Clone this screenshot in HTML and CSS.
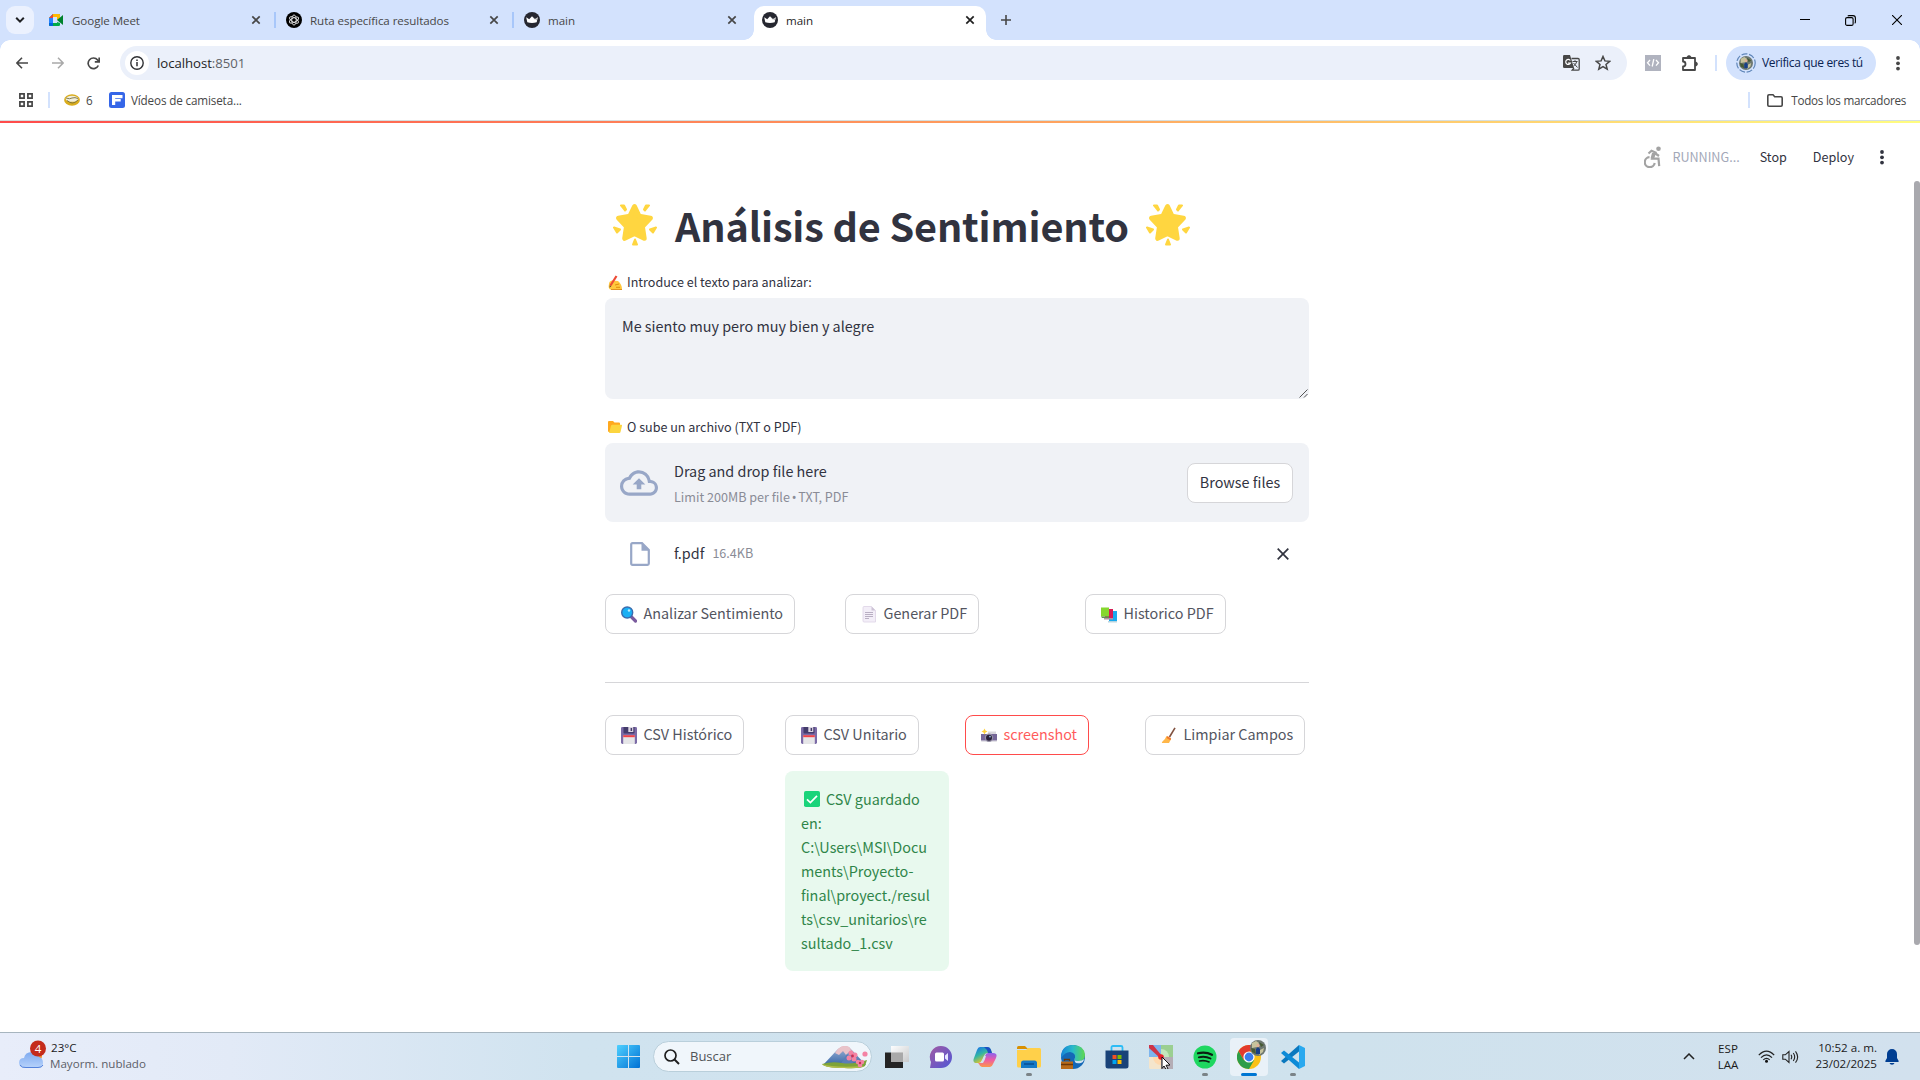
FILE: index.html
```html
<!DOCTYPE html>
<html lang="es">
<head>
<meta charset="utf-8">
<title>main</title>
<link rel="stylesheet" href="styles.css">
</head>
<body>
<svg class="defs" width="0" height="0">
  <symbol id="x" viewBox="0 0 10 10"><path d="M1.3 1.3l7.4 7.4M8.7 1.3L1.3 8.7" stroke="currentColor" stroke-width="1.7" fill="none"/></symbol>
  <symbol id="dots" viewBox="0 0 4 16"><g fill="currentColor"><circle cx="2" cy="3" r="1.9"/><circle cx="2" cy="8.3" r="1.9"/><circle cx="2" cy="13.6" r="1.9"/></g></symbol>
  <symbol id="crown" viewBox="0 0 16 16"><circle cx="8" cy="8" r="8" fill="#262730"/><path d="M2.200 5.200l3 2L8 4.300l2.800 2.900 3-2-1.100 5Q8 11.700 3.300 10.200z" fill="#fff"/><path d="M8 4.300l2.800 2.900 3-2-1 3.300z" fill="#bbb"/></symbol>
  <symbol id="star" viewBox="0 0 44 42"><g fill="#ffd640" stroke="#ffd640" stroke-linejoin="round"><path stroke-width="5" d="M21.500 3l4.600 9.800 11.300 1.800-8 8.500 1.800 11.700L21.500 30l-9.800 4.800 1.800-11.700-8-8.500 11.300-1.800z"/><path stroke-width="2" d="M8 2l3 0 2 4-1 1zM36 2l-3 0-2 4 1 1zM1 24l6 2-3 3zM43 24l-6 2 3 3zM22 36l2 5h-4z"/></g></symbol>
  <symbol id="disk" viewBox="0 0 16 17"><path d="M0 1.200Q0 0 1.200 0h13.600Q16 0 16 1.200v14Q16 17 14.500 17H1.500Q0 17 0 15.200z" fill="#7b6aa6"/><path d="M2.500 0h11v5.500q0 1-1 1h-9q-1 0-1-1z" fill="#433b6b"/><path d="M7.300 0h5v5h-5z" fill="#ddd6e3"/><path d="M9.600 1h1.500v3H9.600z" fill="#433b6b"/><path d="M2.200 8.500h11.600V17H2.200z" fill="#e6e6e8"/><path d="M2.200 8.200h11.600v2H2.200z" fill="#f04348"/></symbol>
  <symbol id="avatar" viewBox="0 0 16 16"><circle cx="8" cy="8" r="8" fill="#6d7770"/><path d="M2 3l4-2 3 2-2 4-5 1zM10 10l4-2-1 4-4 3z" fill="#c6c39c"/><path d="M1 8l4 1 1 5-4-2zM9 2l5 3-3 2z" fill="#475a34"/><path d="M6 14V9l2-2 2 2v5z" fill="#183e86"/><circle cx="8" cy="5.500" r="1.700" fill="#e0b295"/></symbol>
</svg>

<header class="tabs">
  <div class="tab-search"><svg width="10" height="8" viewBox="0 0 10 8"><path d="M1.200 1.800L5 5.600l3.800-3.800" stroke="#202124" stroke-width="2" fill="none"/></svg></div>
  <div class="tab">
    <svg width="16" height="16" viewBox="0 0 16 16"><path d="M1 6l4-4h5.500Q12 2 12 3.200V6l-3 2V5H5v6h4v-1l3 1v2q0 1-1.200 1H2.200Q1 14 1 13z" fill="#00ac47"/><path d="M5 2v4H1z" fill="#ea4335"/><path d="M5 2h6q1 0 1 1v3L9 8V5H5z" fill="#ffba00"/><path d="M1 6h4v5H1z" fill="#2684fc"/><path d="M1 11h4v3H2q-1 0-1-1z" fill="#0066da"/><path d="M9 8l6-5v10z" fill="#00832d"/></svg>
    <span>Google Meet</span><svg class="close" width="10" height="10"><use href="#x"/></svg>
  </div>
  <div class="tab">
    <svg width="16" height="16" viewBox="0 0 16 16"><circle cx="8" cy="8" r="8" fill="#000"/><g fill="none" stroke="#e6e6e6" stroke-width=".9"><ellipse cx="8" cy="8" rx="2.200" ry="5"/><ellipse cx="8" cy="8" rx="2.200" ry="5" transform="rotate(60 8 8)"/><ellipse cx="8" cy="8" rx="2.200" ry="5" transform="rotate(120 8 8)"/></g></svg>
    <span>Ruta específica resultados</span><svg class="close" width="10" height="10"><use href="#x"/></svg>
  </div>
  <div class="tab last">
    <svg width="16" height="16"><use href="#crown"/></svg>
    <span>main</span><svg class="close" width="10" height="10"><use href="#x"/></svg>
  </div>
  <div class="tab active">
    <svg width="16" height="16"><use href="#crown"/></svg>
    <span>main</span><svg class="close" width="10" height="10"><use href="#x"/></svg>
  </div>
  <svg class="plus" width="10" height="10" viewBox="0 0 10 10"><path d="M5 0v10M0 5h10" stroke="#474747" stroke-width="1.600"/></svg>
  <div class="win">
    <svg width="10" height="10" viewBox="0 0 10 10"><path d="M0 4.500h10" stroke="#000"/></svg>
    <svg width="11" height="11" viewBox="0 0 11 11"><g fill="none" stroke="#000" stroke-width="1.100"><rect x=".6" y="2.600" width="7.500" height="7.800" rx="1.500"/><path d="M2.800 1.200Q3.200.6 4 .6h4Q10.400.6 10.400 3v4q0 .8-.7 1.200"/></g></svg>
    <svg width="10" height="10" viewBox="0 0 10 10"><path d="M0 0l10 10M10 0L0 10" stroke="#000" stroke-width="1.100"/></svg>
  </div>
</header>

<div class="toolbar">
  <div class="nav">
    <svg width="12" height="12" viewBox="0 0 12 12"><path d="M12 6H1M6 .8L.9 6 6 11.200" stroke="#474747" stroke-width="1.600" fill="none"/></svg>
    <svg width="12" height="12" viewBox="0 0 12 12"><path d="M0 6h11M6 .8L11.100 6 6 11.200" stroke="#a9a9a9" stroke-width="1.500" fill="none"/></svg>
    <svg width="13" height="13" viewBox="0 0 13 13"><path d="M11.300 8.500A5.300 5.300 0 1 1 10.600 3L12 4.500M12.200.5v4.300H7.800" stroke="#474747" stroke-width="1.700" fill="none"/></svg>
  </div>
  <div class="omni">
    <div class="info"><svg width="14" height="14" viewBox="0 0 14 14"><circle cx="7" cy="7" r="6.200" fill="none" stroke="#303134" stroke-width="1.400"/><path d="M7 6v4.300M7 3.400V5" stroke="#303134" stroke-width="1.500"/></svg></div>
    <span class="url">localhost<i>:8501</i></span>
    <svg class="tr" width="17" height="16" viewBox="0 0 17 16"><path d="M0 1.200Q0 0 1.200 0H7l4 13H1.200Q0 13 0 11.800z" fill="#474747"/><path d="M8.500 3.500H15q1.200 0 1.200 1.200V14q0 1.200-1.200 1.200H9.200L11 13" fill="none" stroke="#474747" stroke-width="1.300"/><path d="M9.500 6.500h5M12 5.200v1.300M13.800 6.500q-.8 3.200-3.300 4.500M10.500 8l4 4.500" fill="none" stroke="#474747"/><path d="M7.300 5.500A2.500 2.500 0 1 0 7.500 8H5" fill="none" stroke="#fff" stroke-width="1.200"/></svg>
    <svg class="bm" width="16" height="16" viewBox="0 0 16 16"><path d="M8 1.500l1.900 4.400 4.800.4-3.700 3.100 1.200 4.700L8 11.600l-4.200 2.500L5 9.400 1.300 6.300l4.800-.4z" fill="none" stroke="#474747" stroke-width="1.500"/></svg>
  </div>
  <svg class="code" width="16" height="16" viewBox="0 0 16 16"><path fill="#b0b3bf" d="M0 0h16v16H0z"/><path d="M5 5L2.500 7.800 5 10.600M11 5l2.500 2.800L11 10.600M8.800 4.200L7.200 11.500" stroke="#fff" stroke-width="1.300" fill="none"/></svg>
  <svg class="puz" width="17" height="17" viewBox="0 0 17 17"><path d="M1 3h12v12H1v-3.500a2.400 2.400 0 0 0 0-5z" fill="none" stroke="#474747" stroke-width="1.800" stroke-linejoin="round"/><path d="M5 2.500a2 1.800 0 0 1 4 0zM13.500 7a1.800 2 0 0 1 0 4z" fill="#474747" stroke="#474747"/></svg>
  <b class="sep"></b>
  <div class="chip"><svg width="20" height="20" viewBox="0 0 20 20"><circle cx="10" cy="10" r="9.200" fill="none" stroke="#5f86b9" stroke-width="1.200" stroke-dasharray="6 1.700"/><use href="#avatar" x="3" y="3" width="14" height="14"/></svg><span>Verifica que eres tú</span></div>
  <svg class="menu" width="4" height="16"><use href="#dots"/></svg>
</div>

<div class="marks">
  <svg width="14" height="14" viewBox="0 0 14 14"><g fill="none" stroke="#474747" stroke-width="1.700"><path d="M.9.900h4.200v4.200H.9zM8.900.900h4.200v4.200H8.900zM.9 8.900h4.200v4.200H.9zM8.900 8.900h4.200v4.200H8.900z"/></g></svg>
  <b class="sep"></b>
  <svg class="ml" width="16" height="12" viewBox="0 0 16 12"><ellipse cx="8" cy="6" rx="7.900" ry="5.800" fill="#d9ac1c"/><ellipse cx="8" cy="4.800" rx="6.300" ry="3" fill="#f1eedc"/><path d="M2 4q4 1.500 6 0 3-1 6 .5M3 6.500q3 2.500 5.500 2.500T14 6" fill="none" stroke="#77703f" stroke-width=".9"/></svg>
  <span class="six">6</span>
  <svg class="fic" width="16" height="16" viewBox="0 0 16 16"><rect width="16" height="16" rx="2.500" fill="#3566e8"/><path d="M3 3h10.500v3.200H6.200V7h5.500v2.600H6.200V13H3z" fill="#fff"/></svg>
  <span class="vid">Vídeos de camiseta...</span>
  <b class="sep right"></b>
  <svg width="16" height="13" viewBox="0 0 16 13"><path d="M.8 2Q.8.800 2 .800h4l1.700 1.900H14q1.200 0 1.200 1.200V11q0 1.200-1.200 1.200H2Q.8 12.200.8 11z" fill="none" stroke="#474747" stroke-width="1.600"/></svg>
  <span class="all">Todos los marcadores</span>
</div>
<div class="rainbow"></div>

<main class="app">
  <div class="bar">
    <svg width="18" height="22" viewBox="0 0 18 22"><g fill="none" stroke="#a3a3a3" stroke-width="2.200"><path d="M5.500 11.200A5 5 0 1 0 10.700 17" /><path d="M4.500 7.500l3-2.700 4 1.800-3.200 6h6.200l.7 7.500"/><path d="M11.500 7.500l3.500 2.500"/></g><circle cx="14.500" cy="2.700" r="2.300" fill="#a3a3a3"/><path d="M8 7l4-.5-2 6H6.500z" fill="#a3a3a3"/></svg>
    <span class="run">RUNNING...</span><span class="stop">Stop</span><span class="deploy">Deploy</span>
    <svg class="menu" width="4" height="16"><use href="#dots"/></svg>
  </div>
  <div class="col">
    <h1><svg width="44" height="43"><use href="#star"/></svg><span>Análisis de Sentimiento</span><svg width="44" height="43"><use href="#star"/></svg></h1>
    <div class="label l1"><svg width="16" height="15" viewBox="0 0 16 15"><path d="M2 9Q2 6 5 5.500L11 6q4 3 4 8.500H3Q1 13 2 9z" fill="#ffc83d"/><path d="M8 10l4-1M9 12.300h4M4 14.500h11" stroke="#d67d00" stroke-width=".8" fill="none"/><path d="M3.500 10.500L9.500 1" stroke="#ed4b36" stroke-width="2.200"/><path d="M2.500 12.700l.3-2.500 1.500 1z" fill="#5b3f2b"/></svg><span>Introduce el texto para analizar:</span></div>
    <div class="area">Me siento muy pero muy bien y alegre<svg width="9" height="9" viewBox="0 0 9 9"><path d="M.5 8.500l8-8M5 8.500L8.500 5" stroke="#555" fill="none"/></svg></div>
    <div class="label l2"><svg width="16" height="14" viewBox="0 0 16 14"><path d="M1 2q0-1 1-1h4l1.500 1.500H12q1 0 1 1V12H2q-1 0-1-1z" fill="#ffa91f"/><path d="M4 5.800Q4.300 4.800 5.500 4.800h8.800q1 0 .7 1L13.500 12q-.2 1-1.200 1H2z" fill="#fcd53f"/></svg><span>O sube un archivo (TXT o PDF)</span></div>
    <div class="drop">
      <svg width="38" height="38" viewBox="0 0 24 24" fill="#98a7c7"><path d="M19.350 10.040A7.490 7.490 0 0 0 12 4C9.110 4 6.600 5.640 5.350 8.040A5.994 5.994 0 0 0 0 14c0 3.310 2.690 6 6 6h13c2.760 0 5-2.240 5-5 0-2.640-2.050-4.780-4.650-4.960zM19 18H6c-2.210 0-4-1.790-4-4 0-2.050 1.530-3.760 3.560-3.970l1.070-.11.500-.95A5.469 5.469 0 0 1 12 6c2.620 0 4.880 1.860 5.390 4.430l.3 1.500 1.530.11A2.980 2.980 0 0 1 22 15c0 1.650-1.350 3-3 3zM8 13h2.550v3h2.900v-3H16l-4-4z"/></svg>
      <div class="dtext"><span>Drag and drop file here</span><small>Limit 200MB per file <i class="dot">•</i> TXT, PDF</small></div>
      <div class="btn browse"><span>Browse files</span></div>
    </div>
    <div class="file">
      <svg class="doc" width="20" height="24" viewBox="0 0 20 24"><path d="M1.200 2.500Q1.200 1.200 2.500 1.200H12l6.800 6.800v13.500q0 1.300-1.300 1.300h-15q-1.300 0-1.300-1.300z" fill="none" stroke="#98a7c7" stroke-width="2.200"/><path d="M11.500 1v7.800H19z" fill="#98a7c7"/></svg>
      <span>f.pdf</span><small>16.4KB</small>
      <svg class="rm" width="12" height="12" viewBox="0 0 12 12"><path d="M.7.700l10.600 10.600M11.300.700L.7 11.300" stroke="#31333f" stroke-width="1.700"/></svg>
    </div>
    <div class="row three">
      <div class="btn"><svg width="16" height="17" viewBox="0 0 16 17"><path d="M10 10.500l4.500 4.500" stroke="#7b5c9e" stroke-width="3.200" stroke-linecap="round"/><circle cx="6.200" cy="6.500" r="5.500" fill="#1ab0f5" stroke="#3a6cae" stroke-width="1.400"/><circle cx="8" cy="4.500" r="1.200" fill="#b9efff"/></svg><span>Analizar Sentimiento</span></div>
      <div class="btn"><svg width="16" height="17" viewBox="0 0 16 17"><path d="M2 1.500Q2 .5 3 .5h7.500l4 4V16H3q-1 0-1-1z" fill="#f3eef8" stroke="#ddd3e6" stroke-width=".8"/><path d="M10.500.5v4h4z" fill="#cdc4d6"/><path d="M4 6.500h8M4 8.500h8M4 10.500h8M4 12.500h4" stroke="#a99eb5" stroke-width=".8"/></svg><span>Generar PDF</span></div>
      <div class="btn"><svg width="16" height="17" viewBox="0 0 16 17"><path d="M8 5h8v10H8z" fill="#18a9ee"/><path d="M7 15h9v1.500H7z" fill="#b8d4df"/><path d="M4 3h8v10H4z" fill="#d51c55"/><path d="M3 12h9v1.500H3z" fill="#b193a2"/><path d="M0 1.500h8v9H0z" fill="#86d72f"/><path d="M0 10.500h8V12H1z" fill="#628f54"/></svg><span>Historico PDF</span></div>
    </div>
    <hr>
    <div class="row four">
      <div class="btn"><svg width="16" height="17"><use href="#disk"/></svg><span>CSV Histórico</span></div>
      <div class="cell"><div class="btn"><svg width="16" height="17"><use href="#disk"/></svg><span>CSV Unitario</span></div>
        <div class="ok"><svg width="16" height="16" viewBox="0 0 16 16"><rect width="16" height="16" rx="1.800" fill="#1ad47a"/><path d="M3 8.300l3.400 3.300L13 4.800" stroke="#fff" stroke-width="1.700" fill="none"/></svg>CSV guardado<br>en:<br>C:\Users\MSI\Docu<br>ments\Proyecto-<br>final\proyect./resul<br>ts\csv_unitarios\re<br>sultado_1.csv</div>
      </div>
      <div class="btn red"><svg width="16" height="17" viewBox="0 0 16 17"><path d="M7 4.500h8V8H7z" fill="#d9d7dd"/><path d="M0 7h16v6.500Q16 14.500 15 14.500H1q-1 0-1-1z" fill="#756698"/><path d="M0 13.500h16v1.300H0z" fill="#eee"/><circle cx="8" cy="10.800" r="4.200" fill="#9690a6"/><circle cx="8" cy="10.800" r="3" fill="#28203a"/><circle cx="9" cy="9.600" r=".9" fill="#91b9dd"/><path d="M3.500 1.500l1 2 2 1-2 1-1 2-1-2-2-1 2-1z" fill="#ffd23c"/></svg><span>screenshot</span></div>
      <div class="btn"><svg width="16" height="17" viewBox="0 0 16 17"><path d="M14 .8L8.500 10" stroke="#80513f" stroke-width="1.600"/><path d="M5.500 9l4.500 3-2 4H1q-.5-1 .5-1.500Q4 13 5.500 9z" fill="#ffb74a"/><path d="M6.500 9l3.700 2.500-.8 1.800L5.500 11z" fill="#f27a2b"/></svg><span>Limpiar Campos</span></div>
    </div>
  </div>
  <div class="scroll"></div>
</main>

<footer class="task">
  <div class="weather">
    <svg width="30" height="34" viewBox="0 0 30 34"><defs><linearGradient id="cl" x2="0" y2="1"><stop stop-color="#7eaaf0"/><stop offset="1" stop-color="#b8d3fb"/></linearGradient></defs><circle cx="19" cy="16" r="5" fill="#f28c28"/><path d="M7 28q-6 0-6-5t5-5q1-6 8-6 5 0 7 5 4 1 4 6t-5 5z" fill="url(#cl)"/><path d="M2 25q2 3 6 2.500h12q4 0 5-2.500" stroke="#5583dc" fill="none"/><circle cx="20" cy="8.500" r="8" fill="#c42b1c"/><text x="20" y="12.500" text-anchor="middle" class="num">4</text></svg>
    <div><span class="deg">23°C</span><span class="may">Mayorm. nublado</span></div>
  </div>
  <svg class="logo" width="23" height="23" viewBox="0 0 23 23"><defs><linearGradient id="wn" x2="1" y2="1"><stop stop-color="#4ed0ff"/><stop offset="1" stop-color="#0070d4"/></linearGradient></defs><path fill="url(#wn)" d="M1 0h10v11H0V1Q0 0 1 0zM12 0h10q1 0 1 1v10H12zM0 12h11v11H1q-1 0-1-1zM12 12h11v10q0 1-1 1H12z"/></svg>
  <div class="search">
    <svg width="16" height="16" viewBox="0 0 16 16"><circle cx="6.500" cy="6.500" r="5.500" fill="none" stroke="#1f1f1f" stroke-width="1.700"/><path d="M10.500 10.500l4.500 4.500" stroke="#1f1f1f" stroke-width="2"/></svg>
    <span>Buscar</span>
    <svg class="fuji" width="46" height="24" viewBox="0 0 46 24"><defs><linearGradient id="fj" x2="0" y2="1"><stop stop-color="#e8aab4"/><stop offset=".4" stop-color="#7897c5"/><stop offset="1" stop-color="#3868a8"/></linearGradient></defs><path d="M1 20L16 4q5-5 11-2l17 18z" fill="url(#fj)"/><path d="M16 4q5-5 11-2l4 6-4-1-3 3-3-4-4 4-4-2z" fill="#e9c3c9"/><path d="M18 20l7-11 8 11z" fill="#5b7db7"/><path d="M0 19q10-3 20-1t25-3l-2 6q-4 3-21 2-19 0-22-4z" fill="#7da338"/><path d="M0 19q12 4 42 2-5 3-20 2-19 0-22-4z" fill="#b2bd4a"/><g fill="#f483a4"><circle cx="29" cy="8" r="2.500"/><circle cx="33" cy="10" r="2.500"/><circle cx="32" cy="14" r="2.500"/><circle cx="27" cy="13" r="2.500"/><circle cx="36" cy="17" r="2.300"/><circle cx="40" cy="17" r="2.300"/><circle cx="38" cy="20" r="2.300"/><circle cx="43" cy="9" r="2.600"/></g><circle cx="30.500" cy="11" r="1.400" fill="#c93054"/><circle cx="38" cy="18" r="1.200" fill="#c93054"/></svg>
  </div>
  <div class="icons">
    <div><svg width="24" height="22" viewBox="0 0 24 22"><defs><linearGradient id="tv" x2="1" y2="1"><stop stop-color="#fff"/><stop offset="1" stop-color="#c9c9c9"/></linearGradient></defs><path d="M0 6.500h18V22H0z" fill="#242424"/><path d="M6 0h18v16H6z" fill="url(#tv)" opacity=".95"/><path d="M6 6.500h12V16H6z" fill="#a9a9a9"/></svg></div>
    <div><svg width="24" height="24" viewBox="0 0 24 24"><defs><linearGradient id="ct" x2="1" y2="1"><stop stop-color="#a25aa4"/><stop offset="1" stop-color="#4f57d5"/></linearGradient></defs><path d="M12 1a11 11 0 1 1 0 22H1l1-6A11 11 0 0 1 12 1z" fill="url(#ct)"/><rect x="6" y="7.500" width="9" height="9" rx="1.500" fill="#fff"/><path d="M16 10.500l3-2.500v8l-3-2.500z" fill="#e5e5ff"/></svg></div>
    <div><svg width="24" height="24" viewBox="0 0 24 24"><defs><linearGradient id="c1" x2=".6" y2="1"><stop offset=".1" stop-color="#1976e8"/><stop offset=".5" stop-color="#31b6a3"/><stop offset=".9" stop-color="#e8c528"/></linearGradient><linearGradient id="c2" x2="0" y2="1"><stop stop-color="#8b62ef"/><stop offset=".5" stop-color="#ef5ca4"/><stop offset="1" stop-color="#fb974b"/></linearGradient></defs><path d="M7 2h8q2 0 3 3l1 3h-4q-3 0-4 3l-2 4q-1 3-3 3H4q-5 0-3-5L4 5q1-3 3-3z" fill="url(#c1)"/><path d="M14 2q3 0 4 3l1 3h-4q-1-4-4-6z" fill="#1b4fc4"/><path d="M17 22H9q-2 0-3-3l-1-1h1q3 0 4-3l2-4q1-3 3-3h5q5 0 3 5l-3 6q-1 3-3 3z" fill="url(#c2)"/><path d="M11 11q-1.500 5-4 7h3q2-3 3-7z" fill="#d0e3ef"/></svg></div>
    <div class="open"><svg width="24" height="22" viewBox="0 0 24 22"><path d="M0 1.500Q0 0 1.500 0H8l3 3H0z" fill="#d99000"/><path d="M0 4h9l2-2h11.500Q24 2 24 3.500V20q0 1.500-1.500 1.500h-21Q0 21.500 0 20z" fill="#ffd04a"/><path d="M4 22v-5q0-2.500 2.500-2.500h11Q20 14.500 20 17v5z" fill="#1679c6"/><path d="M7 18h10" stroke="#084e93" stroke-width="1.500"/></svg></div>
    <div><svg width="24" height="24" viewBox="0 0 24 24"><defs><linearGradient id="ed"><stop stop-color="#1583d8"/><stop offset=".5" stop-color="#2abac9"/><stop offset="1" stop-color="#5fd94c"/></linearGradient></defs><circle cx="12" cy="12" r="12" fill="#1468b7"/><path d="M0 11Q1 0 12 0q11 0 12 10 0 6-7 6-5 0-3-3 1-5-5-6Q4 7 0 13z" fill="url(#ed)"/><path d="M14 13q-2 3 3 3 4 0 6.500-2-1 3-3.500 4-5 1-6-1-1-2 0-4z" fill="#d0e3ef"/><path d="M0 16.500h12V24H0z" fill="#b96b18"/><path d="M0 19.500h12M3.500 16v-1.500h5V16" fill="none" stroke="#6c3808" stroke-width="1.300"/></svg></div>
    <div><svg width="24" height="24" viewBox="0 0 24 24"><path d="M6.500 6V2.500Q6.500 1 8 1h8q1.500 0 1.500 1.500V6" fill="none" stroke="#2dbcf5" stroke-width="1.800"/><path d="M.5 5.500h23V21q0 2.500-2.500 2.500H3Q.5 23.500.5 21z" fill="#194278"/><path d="M7.500 10h4v4h-4z" fill="#f25022"/><path d="M12.500 10h4v4h-4z" fill="#7fba00"/><path d="M7.500 15h4v4h-4z" fill="#00a4ef"/><path d="M12.500 15h4v4h-4z" fill="#ffb900"/></svg></div>
    <div><svg width="24" height="24" viewBox="0 0 24 24"><rect width="24" height="24" rx="1.500" fill="#f4e5cc"/><path d="M0 0h12v12H0z" fill="#7db5ee"/><path d="M12 0h12v12H12z" fill="#9bcf91"/><path d="M12 12h12v12H12z" fill="#b4adb5"/><path d="M12 4a8 8 0 0 1 8 8h-8z" fill="#c3e6bd"/><path d="M4 12a8 8 0 0 0 8 8v-8z" fill="#ffd9ae"/><path d="M0 0h4l9 11-2 2L0 3z" fill="#cf3447"/><circle cx="12" cy="12" r="2.800" fill="#e9202b"/><path d="M13 12l8 8-4 .3 2 3.400-2 .8-2-3.500-2 2.500z" fill="#fff" stroke="#111" stroke-width="1"/></svg></div>
    <div class="open"><svg width="24" height="24" viewBox="0 0 24 24"><circle cx="12" cy="12" r="11.500" fill="#1ed760"/><g fill="none" stroke="#0b1d12" stroke-linecap="round"><path d="M5 8.300q7.500-2 14 1.500" stroke-width="2.200"/><path d="M5.800 12.300q6.200-1.600 11.700 1.200" stroke-width="1.900"/><path d="M6.500 16q5-1.200 9.600 1" stroke-width="1.600"/></g></svg></div>
    <div class="cur"><svg width="24" height="24" viewBox="0 0 24 24"><circle cx="12" cy="12" r="12" fill="#fbc116"/><path d="M1.600 6A12 12 0 0 0 12 24l5.200-9-5.200 1-5.200-1z" fill="#2d9d49"/><path d="M1.600 6l5.200 9L12 12V6.500L22.400 6A12 12 0 0 0 1.600 6z" fill="#e33b2e"/><circle cx="12" cy="12" r="5.600" fill="#fff"/><circle cx="12" cy="12" r="4.400" fill="#3b7ded"/></svg><svg class="who" width="16" height="16"><use href="#avatar"/></svg></div>
    <div class="open"><svg width="24" height="24" viewBox="0 0 24 24"><path d="M18 0l6 3v18l-6 3z" fill="#2aa9ef"/><path d="M18 0v6.500L3 18.500 0 16z" fill="#0b78be"/><path d="M0 8l3-2.500L18 17.500V24z" fill="#0d8bd7"/></svg></div>
  </div>
  <div class="tray">
    <svg width="12" height="7" viewBox="0 0 12 7"><path d="M1 6l5-5 5 5" fill="none" stroke="#222" stroke-width="1.500"/></svg>
    <div class="lang"><span>ESP</span><span>LAA</span></div>
    <svg width="17" height="13" viewBox="0 0 17 13"><g fill="none" stroke="#222" stroke-width="1.200"><path d="M.8 5.200q7.700-8 15.400 0M3 7.700q5.500-5.600 11 0M5.300 9.900q3.200-3 6.400 0"/></g><circle cx="8.500" cy="11.300" r="1.500" fill="#111"/></svg>
    <svg class="vol" width="17" height="14" viewBox="0 0 17 14"><g fill="none" stroke="#222" stroke-width="1.100"><path d="M.8 4.800h2.500L7 1.500v11L3.300 9.200H.8zM9 4.700q1.500 2.300 0 4.600M11.300 3q2.800 4 0 8M13.500 1.300q4.300 5.700 0 11.400"/></g></svg>
    <div class="clock"><span>10:52 a. m.</span><span>23/02/2025</span></div>
    <svg width="14" height="16" viewBox="0 0 14 16"><path d="M7 0a5 5 0 0 1 5 5v4l1.700 3q.3 1-.7 1H1q-1 0-.7-1L2 9V5a5 5 0 0 1 5-5zM4.500 14h5Q9 15.800 7 15.800T4.500 14z" fill="#003e92"/></svg>
  </div>
</footer>
</body>
</html>
```
FILE: styles.css
```css
* { box-sizing: border-box; }
body { margin: 0; width: 1920px; height: 1080px; overflow: hidden; display: flex; flex-direction: column; background: #fff; font: 12px/16px "Open Sans", "Noto Sans", sans-serif; color: #474747; }
svg { flex: none; display: block; }
.defs { position: absolute; }
span, small { white-space: nowrap; }

.tabs { height: 40px; flex: none; background: #d3e2fd; display: flex; align-items: flex-start; padding: 6px 18px 0 6px; }
.tab-search { width: 28px; height: 28px; border-radius: 9px; background: #ebf1fe; display: grid; place-items: center; margin-right: 6px; }
.tab { width: 238px; height: 34px; padding: 0 17px 6px 8px; display: flex; align-items: center; gap: 8px; position: relative; font-size: 11.6px; letter-spacing: -.07px; }
.tab span { padding-top: 2px; }
.tab .close { margin-left: auto; color: #474747; }
.tab::after { content: ""; position: absolute; right: 2px; top: 6px; width: 2px; height: 16px; background: #a8c7fa; }
.tab.last::after { display: none; }
.tab.active { width: 232px; padding-right: 11px; background: #fff; border-radius: 10px 10px 0 0; color: #1f1f1f; }
.tab.active .close { color: #1f1f1f; }
.tab.active::before, .tab.active::after { content: ""; position: absolute; top: auto; bottom: 0; width: 10px; height: 10px; }
.tab.active::before { left: -10px; background: radial-gradient(circle at 0 0, #d3e2fd 9.5px, #fff 10px); }
.tab.active::after { display: block; right: -10px; background: radial-gradient(circle at 100% 0, #d3e2fd 9.5px, #fff 10px); }
.plus { margin: 9px 0 0 15px; }
.win { margin-left: auto; padding-top: 9px; display: flex; gap: 36px; }
.win svg:first-child { margin-right: -1px; }

.toolbar { height: 43px; flex: none; display: flex; align-items: center; padding: 3px 20px 0 16px; background: radial-gradient(circle at 10px 10px, #fff 9.5px, #d3e2fd 10px) 0 0 / 10px 10px no-repeat, radial-gradient(circle at 0 10px, #fff 9.5px, #d3e2fd 10px) 100% 0 / 10px 10px no-repeat, #fff; }
.nav { width: 104px; display: flex; gap: 24px; align-items: center; }
.nav svg:last-child { margin-left: -1px; }
.omni { width: 1507px; height: 34px; border-radius: 17px; background: #ebf0fa; display: flex; align-items: center; padding: 0 16px 0 5px; }
.info { width: 24px; height: 24px; border-radius: 50%; background: #fff; display: grid; place-items: center; margin-right: 8px; }
.url { font-size: 13.2px; color: #1f1f1f; letter-spacing: -.05px; }
.url i { font-style: normal; color: #5f6368; }
.tr { margin-left: auto; margin-right: 15px; }
.code { margin-left: 18px; }
.puz { margin-left: 21px; margin-right: 16px; }
.sep { flex: none; width: 2px; height: 16px; background: #d3e2fd; }
.chip { width: 150px; height: 34px; border-radius: 17px; background: #d3e2fd; margin-left: 9px; padding-left: 10px; display: flex; align-items: center; gap: 6px; color: #0a2353; font-size: 12px; letter-spacing: -.35px; }
.toolbar .menu { margin-left: 20px; color: #474747; }

.marks { height: 37px; flex: none; display: flex; align-items: center; padding: 0 14px 3px 19px; font-size: 11.7px; letter-spacing: -.15px; }
.marks span { padding-bottom: 1px; }
.marks .sep { margin-left: 15px; margin-right: 14px; }
.six { margin-left: 6px; width: 7px; }
.fic { margin-left: 16px; margin-right: 6px; }
.marks .sep.right { margin-left: auto; margin-right: 17px; }
.all { margin-left: 8px; letter-spacing: -.27px; }
.rainbow { height: 3px; flex: none; border-top: 1px solid #d6dfe0; background: linear-gradient(90deg, #ff4b4b, #ffa35f 55%, #fffd80); }

.app { flex: 1; position: relative; font-family: "Noto Sans CJK SC", sans-serif; color: #31333f; }
.bar { height: 60px; display: flex; align-items: center; justify-content: flex-end; padding: 8px 36px 0 0; font-size: 12.6px; line-height: 20px; }
.bar svg:first-child { margin-right: 10px; }
.run { color: #a3a8b8; margin-right: 20px; }
.stop { margin-right: 26px; }
.deploy { margin-right: 26px; }
.bar .menu { color: #31333f; }
.col { width: 704px; margin-left: 605px; font-size: 14.38px; line-height: 24px; }
h1 { margin: 0; height: 86px; padding: 5px 0 0 8px; display: flex; align-items: center; gap: 18px; font-size: 39.6px; line-height: 52px; font-weight: 700; }
h1 svg { margin-top: -8px; }
h1 span { width: 453px; margin-top: -8px; letter-spacing: -.15px; }
.label { display: flex; align-items: center; gap: 4px; padding-left: 2px; font-size: 12.57px; line-height: 20px; height: 20px; }
.l1 { margin-top: 3px; margin-bottom: 6px; }
.area { height: 101px; background: #f0f2f6; border-radius: 8px; padding: 16px 17px; position: relative; }
.area svg { position: absolute; right: 1px; bottom: 1px; }
.l2 { margin-top: 18px; margin-bottom: 6px; }
.drop { height: 79px; background: #f0f2f6; border-radius: 8px; display: flex; align-items: center; padding: 0 16px 0 15px; }
.dtext { display: flex; flex-direction: column; margin-left: 16px; gap: 4px; padding-top: 1px; }
small { font-size: 12.6px; line-height: 20px; color: #8a8c96; }
.dot { font: 12.6px/1 "Noto Sans", sans-serif; margin: 0 -1px; }
.btn { height: 40px; width: max-content; border: 1px solid #d6d6d9; border-radius: 8px; background: #fff; display: flex; align-items: center; gap: 6.5px; padding: 0 11px 0 15px; color: #53555f; }
.btn span { padding-bottom: 2px; }
.browse { margin-left: auto; width: 106px; padding: 0; justify-content: center; color: #31333f; }
.file { height: 72px; display: flex; align-items: center; padding: 0 20px 10px 25px; }
.file span { margin-left: 24px; margin-right: 8px; padding-bottom: 1px; }
.doc, .rm { margin-top: 2px; }
.file .rm { margin-left: auto; }
.row { display: grid; align-items: start; column-gap: 16px; }
.three { grid-template-columns: repeat(3, 1fr); }
.four { grid-template-columns: repeat(4, 1fr); }
hr { border: 0; height: 1px; background: #d6d6d9; margin: 48px 0 32px; }
.btn.red { border-color: #ff4b4b; color: #ff5c5c; }
.ok { margin-top: 16px; height: 200px; border-radius: 8px; background: #e8f9ee; color: #2f8549; padding: 16px 0 0 16px; white-space: nowrap; }
.ok svg { display: inline-block; vertical-align: -2px; margin: 0 6px 0 3px; }
.scroll { position: absolute; right: 0; top: 58px; width: 6px; height: 764px; background: #a9a9ae; border-radius: 3px; }

.task { height: 48px; flex: none; border-top: 1px solid #a7b5bf; background: linear-gradient(90deg, #e8edfa 0, #e2eaf7 12%, #d0e3ef 30%, #cfe2ed 70%, #d2e1ee 100%); display: flex; align-items: center; color: #1b1b1b; font-size: 11.6px; }
.weather { width: 617px; display: flex; align-items: center; gap: 2px; padding-left: 18px; }
.weather div { display: flex; flex-direction: column; padding-bottom: 2px; }
.deg { padding-left: 1px; }
.may { color: #5c6068; }
.num { font-size: 11.5px; fill: #fff; }
.search { width: 219px; height: 31px; margin-left: 13px; border-radius: 16px; background: #f0f6fb; border: 1px solid #b9cfdb; display: flex; align-items: center; padding: 0 3px 0 10px; font-size: 13px; color: #4f5356; }
.search span { margin-left: 10px; padding-bottom: 2px; }
.fuji { margin-left: auto; }
.icons { display: flex; gap: 6px; margin-left: 6px; }
.icons div { width: 38px; height: 38px; display: grid; place-items: center; position: relative; border-radius: 4px; }
.open::after, .cur::after { content: ""; position: absolute; bottom: 0; left: 16px; width: 6px; height: 3px; border-radius: 2px; background: #7b8387; }
.icons .cur { background: #e9f1f8; }
.cur::after { left: 11px; width: 16px; background: #0076d3; }
.icons .who { position: absolute; right: 2px; top: 2px; }
.tray { margin-left: auto; padding-right: 21px; display: flex; align-items: center; }
.lang { width: 22px; margin: 0 19px 0 22px; display: flex; flex-direction: column; align-items: center; }
.vol { margin-left: 7px; }
.clock { width: 78px; margin-right: 8px; display: flex; flex-direction: column; align-items: flex-end; padding-bottom: 2px; }
```
